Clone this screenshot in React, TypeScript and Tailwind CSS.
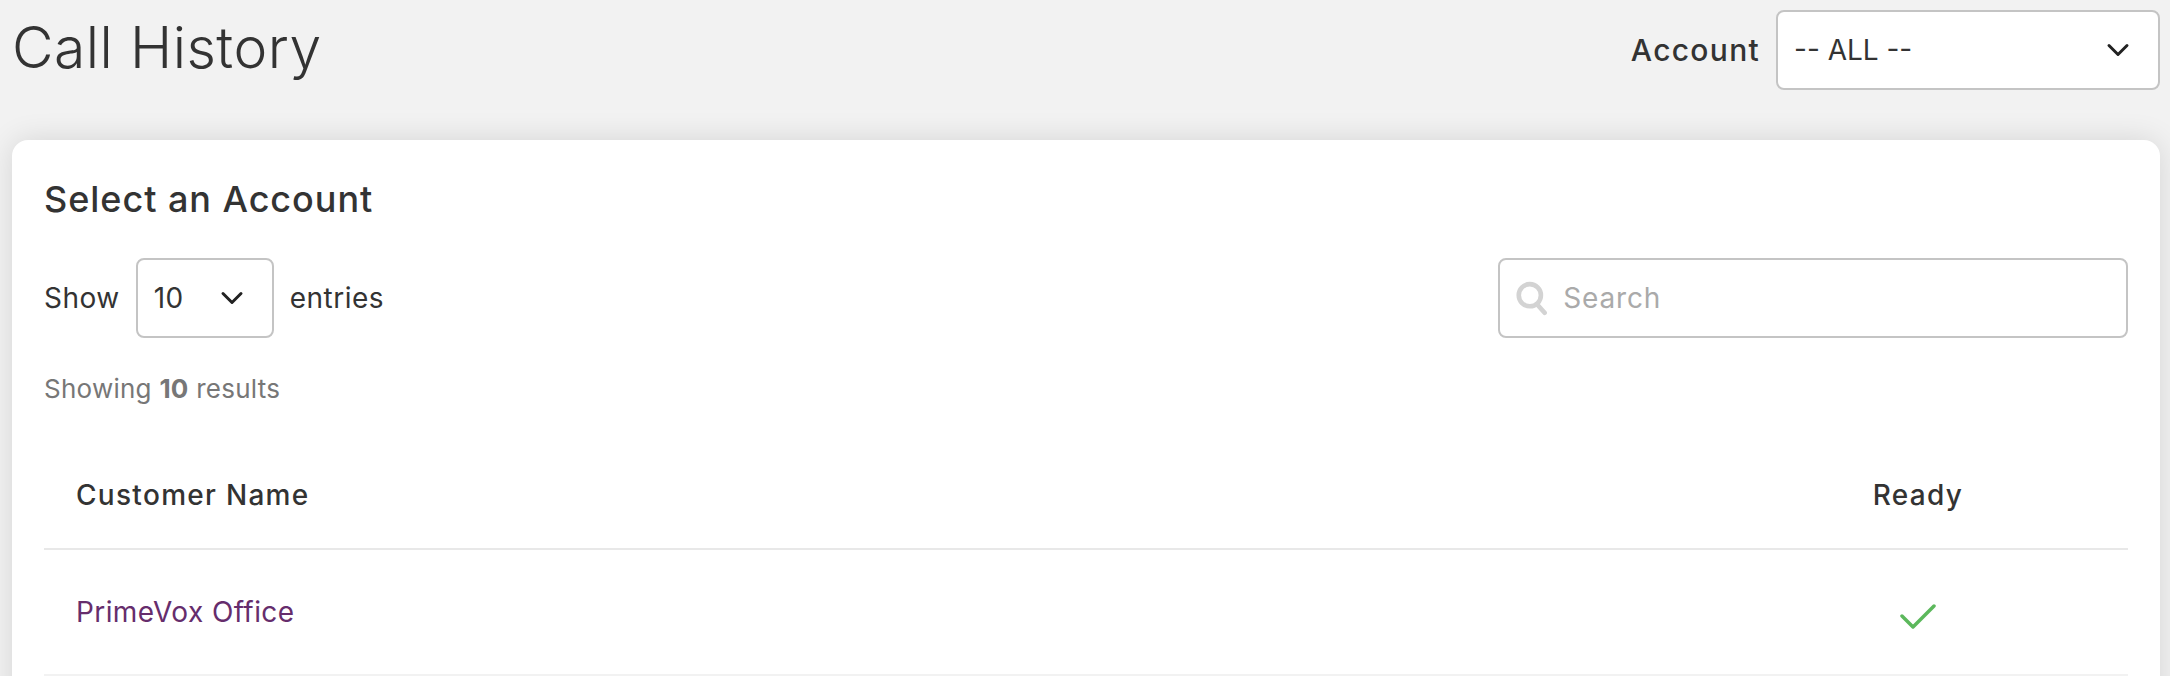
import { ChevronDown } from 'lucide-react';

const font = { fontFamily: 'Inter, "Open Sans", sans-serif' };

export default function App() {
  return (
    <div style={font} className="h-[676px] overflow-hidden bg-[#f2f2f2] pl-3 pr-[10px] text-[#333]">
      <header className="flex h-[140px] items-start justify-between">
        <h1 className="mt-[9px] text-[57px] leading-[78px] font-light tracking-[0.5px]">Call History</h1>
        <div className="mt-[10px] flex items-center gap-4">
          <label className="text-[30px] font-medium tracking-[1.3px]">Account</label>
          <div className="flex h-[80px] w-[384px] items-center justify-between rounded-lg border-2 border-[#c4c4c4] bg-white pr-[22px] pl-4 text-[28px]">
            <span>-- ALL --</span>
            <ChevronDown className="h-9 w-9 text-[#222]" strokeWidth={2} />
          </div>
        </div>
      </header>

      <section className="h-[600px] rounded-2xl bg-white px-8 pt-[34px] shadow-[0_0_30px_rgba(0,0,0,0.12)]">
        <h2 className="text-[36px] leading-[50px] font-medium tracking-[0.95px]">Select an Account</h2>

        <div className="mt-[34px] flex items-center justify-between">
          <div className="flex items-center gap-4 text-[28px] tracking-[0.5px]">
            <span>Show</span>
            <div className="flex h-[80px] w-[138px] items-center justify-between rounded-lg border-2 border-[#c4c4c4] pr-[22px] pl-4">
              <span>10</span>
              <ChevronDown className="h-9 w-9 text-[#222]" strokeWidth={2} />
            </div>
            <span>entries</span>
          </div>
          <div className="flex h-[80px] w-[630px] items-center gap-4 rounded-lg border-2 border-[#c4c4c4] pl-4">
            <svg viewBox="0 0 34 36" className="h-9 w-[34px]" fill="none" stroke="#d3d3d3" strokeWidth="5" strokeLinecap="round">
              <circle cx="15" cy="15" r="12" />
              <path d="M23 25 31 34" />
            </svg>
            <input placeholder="Search" className="w-full bg-transparent text-[28px] tracking-[0.8px] outline-none placeholder:text-[#aaa]" />
          </div>
        </div>

        <p className="mt-[32px] text-[26px] leading-[38px] tracking-[0.25px] text-[#777]">
          Showing <b className="font-bold">10</b> results
        </p>

        <table className="mt-[22px] w-full border-collapse text-left">
          <thead>
            <tr className="h-[119px] border-b-2 border-[#e8e8e8] text-[28px] tracking-[1.3px]">
              <th className="px-8 pt-[12px] font-medium">Customer Name</th>
              <th className="w-[420px] pt-[12px] text-center font-medium">Ready</th>
            </tr>
          </thead>
          <tbody>
            <tr className="h-[126px] border-b-2 border-[#f2f2f2]">
              <td className="px-8 text-[28px] tracking-[0.4px] text-[#662d6c]">PrimeVox Office</td>
              <td className="text-center">
                <svg viewBox="0 0 36 26" className="mx-auto mt-[10px] h-[26px] w-9" fill="none" stroke="#5cb85c" strokeWidth="3.5" strokeLinecap="round" strokeLinejoin="round">
                  <path d="M2 12 13 23 34 2" />
                </svg>
              </td>
            </tr>
          </tbody>
        </table>
      </section>
    </div>
  );
}
